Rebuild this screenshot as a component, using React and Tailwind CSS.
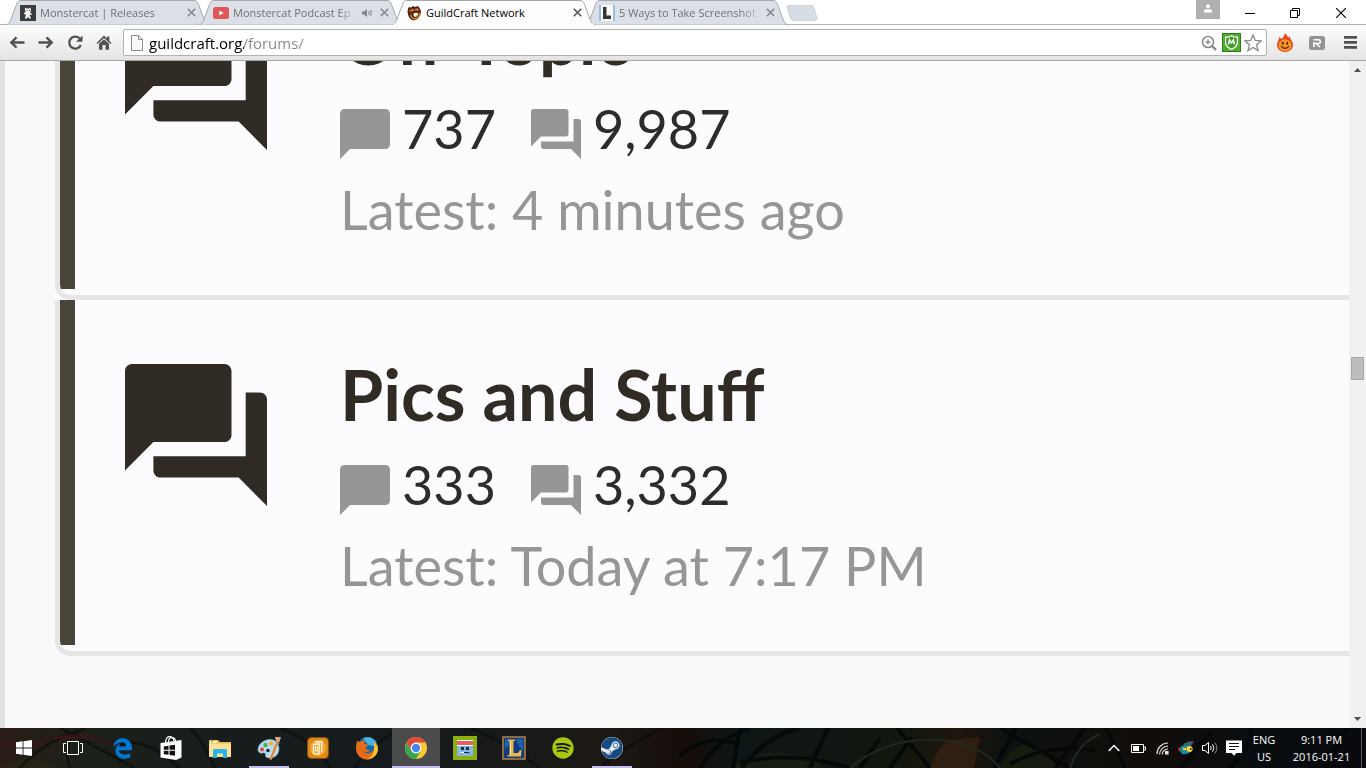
import React, { useState } from 'react';
import { FaSpotify, FaSteam } from 'react-icons/fa';
import { FaEdgeLegacy } from 'react-icons/fa6';

const forums = [
  { title: 'Off-Topic', threads: '737', posts: '9,987', latest: '4 minutes ago' },
  { title: 'Pics and Stuff', threads: '333', posts: '3,332', latest: 'Today at 7:17 PM' },
];

const tabs = [
  { title: 'Monstercat | Releases', icon: 'monstercat' },
  { title: 'Monstercat Podcast Ep.', icon: 'youtube', audio: true },
  { title: 'GuildCraft Network', icon: 'guildcraft', active: true },
  { title: '5 Ways to Take Screenshot', icon: 'lifewire' },
];

const ForumIcon = ({ className }) => (
  <svg viewBox="2 2 20 20" className={className} fill="currentColor" aria-hidden="true">
    <path d="M21 6h-2v9H6v2c0 .55.45 1 1 1h11l4 4V7c0-.55-.45-1-1-1zm-4 6V3c0-.55-.45-1-1-1H3c-.55 0-1 .45-1 1v14l4-4h10c.55 0 1-.45 1-1z" />
  </svg>
);

const BubbleIcon = ({ className }) => (
  <svg viewBox="2 2 20 20" className={className} fill="currentColor" aria-hidden="true">
    <path d="M20.2 2H3.8C2.8 2 2 2.8 2 3.8V22l4-4h14.2c1 0 1.8-.8 1.8-1.8V3.8C22 2.8 21.2 2 20.2 2z" />
  </svg>
);

const favicons = {
  monstercat: (
    <svg viewBox="0 0 16 16" className="size-4 shrink-0">
      <rect width="16" height="16" fill="#2b2b2b" />
      <path d="M5 2.500l1.500 1h2.500l1.500-1 .5 3.500-1 1.500 2 1.500-.7 1-1.800-.5.5 1.500 1 2.500H9l-1-2-1 2H4.800l1-3-.3-1.500-1.500.5v-1.500l2-1.500L5 6z" fill="#fff" />
      <path d="M6.500 5h1v1h-1zM9 5h1v1H9z" fill="#2b2b2b" />
    </svg>
  ),
  youtube: (
    <svg viewBox="0 0 16 16" className="size-4 shrink-0">
      <rect y="2" width="16" height="12" rx="2.500" fill="#e04a4a" />
      <path d="M6.300 5.500v5l4.400-2.500z" fill="#fff" />
    </svg>
  ),
  guildcraft: (
    <svg viewBox="0 0 16 16" className="size-4 shrink-0">
      <path d="M2 3.500l1-1.500 2 .5L7 1l2 1 3-1 1.500 2L15 6l-.5 4-3 4-4 1.500-3-1.500-2-3L1.500 7z" fill="#4a2413" />
      <path d="M3 5l3-2 2 1.500L12 3l1.500 3-2.500.5-3-1-3 1.500-2 .5z" fill="#a54a1c" />
      <path d="M8 8l3-.5 1.500 1.500L10 12l-2-.5L7 10z" fill="#fff3dc" />
      <path d="M4.500 8l1 4 3 2 4-2 1.500-4" fill="none" stroke="#d8892b" strokeWidth="1.300" />
      <path d="M5 6l3-1M9.500 4l2.500.5" stroke="#f0a040" />
      <path d="M3 8l2 1M6 9l1 2M10 6.500l2 1" stroke="#2a0f08" />
    </svg>
  ),
  lifewire: (
    <svg viewBox="0 0 16 16" className="size-4 shrink-0">
      <rect width="16" height="16" fill="#8fbcf0" />
      <rect x="2" width="12" height="16" fill="#fff" />
      <path d="M4 2h3.500v8.500H12V14H4z" fill="#222" />
    </svg>
  ),
};

const Tab = ({ tab }) => (
  <div className={tab.active ? 'relative z-10 flex h-[25px] w-[203px] -mr-[10px] items-center pl-[14px] pr-[13px]' : 'relative flex h-[25px] w-[203px] -mr-[10px] items-center pl-[14px] pr-[13px]'}>
    <svg viewBox="0 0 203 25" className="absolute inset-0 h-full w-full" aria-hidden="true">
      <path
        d="M0 24.500C2.500 24.500 3.500 23 4.500 20.500L10.500 4.500C11.500 1.500 12.500.5 15 .5H188C190.500.5 191.500 1.500 192.500 4.500L198.500 20.500C199.500 23 200.500 24.500 203 24.500"
        fill={tab.active ? '#fdfdfd' : '#dbe0e7'}
        stroke="#a5a8ac"
      />
      {tab.active && <path d="M1 24.500H202" stroke="#fdfdfd" strokeWidth="2" />}
    </svg>
    <a href="#tab" className="relative flex min-w-0 flex-1 items-center gap-1">
      <span className={tab.active ? '' : 'opacity-90'}>{favicons[tab.icon]}</span>
      <span
        className={
          tab.active
            ? 'min-w-0 flex-1 overflow-hidden whitespace-nowrap text-black'
            : 'min-w-0 flex-1 overflow-hidden whitespace-nowrap text-[#6f7174] [mask-image:linear-gradient(to_right,#000_85%,transparent)]'
        }
      >
        {tab.title}
      </span>
    </a>
    {tab.audio && (
      <svg viewBox="0 0 12 10" className="relative ml-1 mr-[3px] h-[10px] w-3 shrink-0" aria-hidden="true">
        <path d="M1 3.500h2L6 1v8L3 6.500H1z" fill="#808285" />
        <path d="M8 3v4M10 2v6" stroke="#808285" />
      </svg>
    )}
    <button aria-label="Close tab" className="relative ml-1 shrink-0">
      <svg viewBox="0 0 9 9" className={tab.active ? 'size-[9px] text-[#555]' : 'size-[9px] text-[#85888c]'}>
        <path d="M.8.8l7.400 7.400M8.200.8L.8 8.200" stroke="currentColor" strokeWidth="1.600" />
      </svg>
    </button>
  </div>
);

const TabStrip = () => (
  <header className="relative z-10 flex h-[25px] shrink-0 items-start bg-white pl-[6px] text-[11px] leading-4 shadow-[inset_0_-1px_0_#b4b4b4]">
    <nav className="flex pr-[10px]" aria-label="Tabs">
      {tabs.map((tab) => (
        <Tab key={tab.title} tab={tab} />
      ))}
    </nav>
    <button aria-label="New tab" className="-ml-[2px] mt-[5px]">
      <svg viewBox="0 0 32 16" className="h-4 w-8">
        <path d="M2.500.5H25c2 0 2.500 1 3 2.500l3 9.500c.5 2-.5 3-2 3H8c-2 0-3-1-3.500-2.500L1 3C.5 1.500 1 .5 2.500.5z" fill="#d7dde5" stroke="#c3c7cc" strokeWidth=".7" />
      </svg>
    </button>
    <div className="ml-auto flex items-start">
      <button aria-label="Profile" className="mr-5 flex h-[19px] w-6 justify-center bg-[#b1b1b1] pt-1">
        <svg viewBox="0 0 10 9" className="h-[9px] w-[10px]" fill="#fff">
          <circle cx="5" cy="2.200" r="2" />
          <path d="M1 8.500V7c0-1.400 2-2 4-2s4 .6 4 2v1.500z" />
        </svg>
      </button>
      <button aria-label="Minimize" className="mr-[25px] flex h-[26px] w-5 items-center justify-center">
        <svg viewBox="0 0 10 10" className="size-[10px]"><path d="M0 5.500h10" stroke="#000" /></svg>
      </button>
      <button aria-label="Restore" className="mr-[26px] flex h-[26px] w-5 items-center justify-center">
        <svg viewBox="0 0 10 10" className="size-[10px]" fill="none" stroke="#000">
          <path d="M.5 2.500h7v7h-7zM2.500 2.500v-2h7v7h-2" />
        </svg>
      </button>
      <button aria-label="Close" className="mr-[15px] flex h-[26px] w-5 items-center justify-center">
        <svg viewBox="0 0 10 10" className="size-[10px]"><path d="M0 0l10 10M10 0L0 10" stroke="#000" strokeWidth="1.100" /></svg>
      </button>
    </div>
  </header>
);

const Toolbar = () => {
  const [url, setUrl] = useState('guildcraft.org/forums/');

  return (
    <div className="flex h-9 shrink-0 items-center border-b border-[#a6a6a6] bg-linear-to-b from-[#fdfdfd] to-[#e4e4e4] pl-[9px] pr-[9px] text-[#515151]">
      <div className="flex items-center gap-[13px]">
        <button aria-label="Back">
          <svg viewBox="0 0 16 16" className="size-4" fill="none" stroke="currentColor" strokeWidth="2.400"><path d="M15.500 7.500H2.500M7.500 2.300L2.300 7.500l5.200 5.200" /></svg>
        </button>
        <button aria-label="Forward">
          <svg viewBox="0 0 16 16" className="size-4" fill="none" stroke="currentColor" strokeWidth="2.400"><path d="M.5 7.500h13M8.500 2.300l5.200 5.200-5.200 5.200" /></svg>
        </button>
        <button aria-label="Reload">
          <svg viewBox="0 0 16 16" className="size-4">
            <path d="M13.800 10A6 6 0 1 1 12.500 3.400" fill="none" stroke="currentColor" strokeWidth="2.300" />
            <path d="M15.500.5v6.200H9z" fill="currentColor" />
          </svg>
        </button>
        <button aria-label="Home">
          <svg viewBox="0 0 16 16" className="size-4" fill="currentColor">
            <path d="M8 .5L.5 8l1 1L8 2.900 14.500 9l1-1L13.300 5.800V1.500H11v2z" />
            <path d="M3 8.800L8 4.200l5 4.600v6H9.500V10h-3v4.800H3z" />
          </svg>
        </button>
      </div>
      <div className="ml-[11px] flex h-[27px] min-w-0 flex-1 items-center rounded-[2px] border border-[#b2b2b2] bg-white pl-[7px] pr-1">
        <svg viewBox="0 0 12 16" className="h-4 w-3 shrink-0" fill="#f8f8f8" stroke="#8c8c8c">
          <path d="M.5.5h7l4 4v11H.5zM7.500.5v4h4" />
        </svg>
        <input
          aria-label="Address"
          value={url}
          onChange={(e) => setUrl(e.target.value)}
          className="ml-[6px] h-6 min-w-0 flex-1 bg-[linear-gradient(to_right,#000_95px,#888_95px)] bg-clip-text text-[15px] text-transparent outline-none"
        />
        <div className="flex items-center gap-[3px]">
          <button aria-label="Zoom" className="mr-[2px]">
            <svg viewBox="0 0 16 16" className="size-4" fill="none" stroke="#8a8a8a">
              <circle cx="7" cy="7" r="5.500" strokeWidth="1.600" />
              <path d="M4.500 7h5M7 4.500v5" strokeWidth="1.300" />
              <path d="M11 11l4 4" strokeWidth="2.400" />
            </svg>
          </button>
          <button aria-label="SiteAdvisor">
            <svg viewBox="0 0 19 19" className="size-[19px]">
              <rect x=".5" y=".5" width="18" height="18" fill="#4fae2c" stroke="#2c7d17" />
              <path d="M3 3.500c2.500.3 4.500-.3 6.500-1.500 2 1.200 4 1.800 6.500 1.500v6c0 3.500-3 6-6.500 7.500C6 15.500 3 13 3 9.500z" fill="#fff" />
              <path d="M4.200 4.700c1.900.1 3.700-.4 5.300-1.300 1.600.9 3.400 1.400 5.300 1.300v4.700c0 2.700-2.500 4.800-5.300 6.200-2.800-1.400-5.300-3.500-5.300-6.200z" fill="#3c9a22" />
              <path d="M6.500 11.500l1-4.500 2 3 2-3 1 4.500" fill="none" stroke="#fff" strokeWidth="1.500" />
            </svg>
          </button>
          <button aria-label="Bookmark">
            <svg viewBox="0 0 18 18" className="size-[18px]" fill="#fff" stroke="#8b8b8b" strokeWidth="1.300">
              <path d="M9 1l2.300 5.400 5.700.5-4.400 3.800L14 16.500 9 13.400l-5 3.100 1.400-5.800L1 6.900l5.700-.5z" />
            </svg>
          </button>
        </div>
      </div>
      <div className="flex items-center">
        <button aria-label="Hola" className="ml-[10px]">
          <svg viewBox="0 0 16 19" className="h-[19px] w-4">
            <path d="M8 0c1 2 3 3 3 5l1.500-2c0 3 3.500 5 3.500 9 0 4-3.500 7-8 7s-8-3-8-7c0-3 2-4 2.200-8L4.500 6C6 5 7.500 3 8 0z" fill="#e8431b" />
            <path d="M8 6c4 1 6.500 3 6.500 6.500S12 18 8 18s-6.500-2-6.500-5.500S4 7 8 6z" fill="#f7951d" />
            <path d="M5.800 9v2.500M10.200 9v2.500" stroke="#40200a" strokeWidth="1.600" />
            <path d="M4 13c2 3.200 6 3.200 8 0" stroke="#40200a" strokeWidth="1.100" fill="none" />
          </svg>
        </button>
        <button aria-label="Extension" className="ml-4">
          <svg viewBox="0 0 16 14" className="h-[14px] w-4">
            <rect width="16" height="14" rx="2.500" fill="#949494" />
            <path d="M5 11V6M4.500 3.800H10c1.800 0 1.800 3.700 0 3.700H7L11 11" fill="none" stroke="#fff" strokeWidth="1.600" />
          </svg>
        </button>
        <button aria-label="Menu" className="ml-[19px]">
          <svg viewBox="0 0 13 13" className="size-[13px]" fill="currentColor">
            <path d="M0 0h13v2.800H0zM0 5h13v2.800H0zM0 10h13v2.800H0z" />
          </svg>
        </button>
      </div>
    </div>
  );
};

const Forum = ({ forum }) => (
  <li className="bg-white last:bg-transparent">
    <article className="flex overflow-hidden rounded-bl-[15px] border-b-5 border-l-5 border-[#e6e6e6] bg-[#fcfcff]">
      <div className="mb-[6px] w-[15px] shrink-0 bg-[#49443a]" />
      <ForumIcon className="ml-[50px] mt-[64px] size-[142px] shrink-0 text-[#302b25]" />
      <div className="ml-[73px] whitespace-nowrap pb-[48px] pt-[49px] font-[Lato,sans-serif] text-[54px] text-[#2c2c2c]">
        <h2 className="text-[70px] font-bold leading-[90px] text-[#302b25]">
          <a href="#forum">{forum.title}</a>
        </h2>
        <div className="flex h-[90px] items-center">
          <BubbleIcon className="mt-3 size-[50px] text-[#969696]" />
          <span className="ml-3">{forum.threads}</span>
          <ForumIcon className="ml-[35px] mt-3 size-[50px] text-[#969696]" />
          <span className="ml-3">{forum.posts}</span>
        </div>
        <p className="leading-[74px] text-[#969696]">Latest: {forum.latest}</p>
      </div>
    </article>
  </li>
);

const Scrollbar = () => (
  <div className="flex w-[17px] shrink-0 flex-col items-center bg-[#f1f1f1]" aria-hidden="true">
    <svg viewBox="0 0 17 17" className="size-[17px]"><path d="M5 11l3.500-4 3.500 4z" fill="#505050" /></svg>
    <div className="flex w-full flex-1 flex-col items-center">
      <div className="h-[44%]" />
      <div className="h-[23px] w-[13px] border border-[#a8a8a8] bg-[#bcbcbc]" />
    </div>
    <svg viewBox="0 0 17 17" className="size-[17px]"><path d="M5 6l3.500 4L12 6z" fill="#505050" /></svg>
  </div>
);

const apps = [
  {
    name: 'Start',
    icon: (
      <svg viewBox="0 0 16 16" className="size-4" fill="#fff">
        <path d="M0 2.200L6.600 1.300v6.200H0zM7.500 1.200L16 0v7.500H7.500zM0 8.500h6.600v6.200L0 13.800zM7.500 8.500H16V16l-8.500-1.200z" />
      </svg>
    ),
  },
  {
    name: 'Task view',
    icon: (
      <svg viewBox="0 0 20 14" className="h-[14px] w-5" fill="none" stroke="#fff">
        <path d="M4.500.5h11v13h-11zM3 2.500H.5v9H3M17 2.500h2.500v9H17" />
      </svg>
    ),
  },
  { name: 'Edge', icon: <FaEdgeLegacy className="size-[21px] text-[#0078d7]" /> },
  {
    name: 'Store',
    icon: (
      <svg viewBox="0 0 22 24" className="h-6 w-[22px]">
        <path d="M5.500 7C5.500 2 8 .7 9.500.7s4 1 4.500 4.300M8.500 6C8.500 2.500 10 1.500 12 1.500s3.500 1 3.500 4" fill="none" stroke="#fff" strokeWidth="1.200" />
        <path d="M.5 7L21.500 4v17.500L16 24 .5 21.500z" fill="#fff" />
        <path d="M3.800 10.500l4.700-.7v4H3.800zM9.500 9.600l5.500-.8v5H9.500zM3.800 14.800h4.700v4l-4.700-.6zM9.500 14.800H15v5l-5.500-.8z" fill="#111" />
      </svg>
    ),
  },
  {
    name: 'File Explorer',
    icon: (
      <svg viewBox="0 0 22 19" className="h-[19px] w-[22px]">
        <path d="M0 1h9l2 2h11v15H0z" fill="#e7b94b" />
        <path d="M1 2h7v2H1z" fill="#f7f2d0" />
        <path d="M2 2h2v1H2z" fill="#4fa66e" />
        <path d="M0 4.500h22V18H0z" fill="#ffe193" />
        <path d="M4 19v-7.500q0-1.500 1.500-1.500h11q1.500 0 1.500 1.500V19h-4v-4.500H8V19z" fill="#27b5ec" />
      </svg>
    ),
  },
  {
    name: 'Paint',
    running: true,
    icon: (
      <svg viewBox="0 0 24 24" className="size-6">
        <path d="M1 14C1 8 7 3.500 13 3.500S22 8 22 13s-4 9-9 9c-3 0-5-1-4.500-3 .5-1.500-1-2.500-3-2S1 16.500 1 14z" fill="#b7dcf3" stroke="#7fb4d5" strokeWidth=".6" />
        <circle cx="5" cy="13.500" r="2" fill="#d94a3a" />
        <circle cx="8.500" cy="9" r="2.200" fill="#51ad43" />
        <circle cx="14" cy="7.500" r="2.200" fill="#f0b52d" />
        <circle cx="11" cy="14.500" r="1.800" fill="#23282a" />
        <path d="M19 6l2.500 1-7 17-2-.5z" fill="#e88a2e" />
        <path d="M18 1l6 0-1.500 5-3 1z" fill="#d9a77b" />
        <path d="M19 5.500l3.500 1.300-.5 1.500-3-1.200z" fill="#8e9aa0" />
      </svg>
    ),
  },
  {
    name: 'Documents',
    icon: (
      <svg viewBox="0 0 22 22" className="size-[22px]">
        <rect x=".5" y=".5" width="21" height="21" rx="4" fill="#df8717" stroke="#8a4d09" />
        <circle cx="11" cy="11" r="8" fill="#f3a633" />
        <path d="M8 5l7-.5-.5 11M6.500 7.500l6-.8-.5 10.300-5.500-.5z" fill="none" stroke="#fff3d7" strokeWidth="1.400" />
        <path d="M8.500 10l2-.3v4.500l-2-.2z" fill="none" stroke="#fff3d7" />
      </svg>
    ),
  },
  {
    name: 'Firefox',
    icon: (
      <svg viewBox="0 0 24 24" className="size-6">
        <circle cx="12.500" cy="11.500" r="10.500" fill="#1667a8" />
        <path d="M8 2.500C12 0 19 1 21.500 7l-3 3-5-1-3-3.500z" fill="#49b3df" />
        <path d="M2 4.500c1 1 2 1.500 3.500 1.500C7 4.500 8.500 4 10 4 9 5.500 9 7 10 8l3 .5c.5 1.500-1.500 2-2.500 3 0 2 3 3.500 5 2-1 3-5.500 3.500-8 1C10 19 18 18 19.500 12c.5-2 0-4.500-1-6C22 8 23.500 11 22.800 14.500 21.500 20 17 23.500 12 23.500 5.500 23.500 1 18.500 1 12.500c0-3 .5-5.500 1-8z" fill="#e66d18" />
        <path d="M18.500 6C22 8 23.500 11 22.800 14.500 21.500 20 17 23.500 12 23.500c6-3 8.500-9 6.500-17.500z" fill="#fdc22c" />
      </svg>
    ),
  },
  {
    name: 'Chrome',
    active: true,
    icon: (
      <svg viewBox="0 0 22 22" className="size-[22px]">
        <circle cx="11" cy="11" r="11" fill="#fbc92f" />
        <path d="M1.500 5.500A11 11 0 0 1 20.500 5.500H11L6.200 13.700z" fill="#e0483a" />
        <path d="M1.500 5.500A11 11 0 0 0 11 22l4.800-8.300H6.200z" fill="#36a852" />
        <circle cx="11" cy="11" r="5.400" fill="#fff" />
        <circle cx="11" cy="11" r="4.200" fill="#4a86ee" />
      </svg>
    ),
  },
  {
    name: 'Dumb Ways',
    icon: (
      <svg viewBox="0 0 24 24" className="size-6">
        <rect width="24" height="24" fill="#8cb010" />
        <rect x="4" y="4" width="16" height="16" fill="#7fb9e4" />
        <path d="M4 4h16v5H4z" fill="#e95e62" />
        <path d="M4 4h16v1H4zM4 9h16v1H4z" fill="#fff" />
        <path d="M8 11h3v3H8zM13 11h3v3h-3z" fill="#1d2c3b" />
        <path d="M7 17.500h3l1-1h5v1" stroke="#1d2c3b" fill="none" />
        <path d="M7 16h4v1.500H7z" fill="#fff" />
      </svg>
    ),
  },
  {
    name: 'League of Legends',
    icon: (
      <svg viewBox="0 0 24 24" className="size-6">
        <rect x="1" y="1" width="22" height="22" fill="#113b7c" stroke="#9b7440" strokeWidth="1.800" />
        <path d="M3 3l7 1-3 5-4 4zM14 3h7v12l-5-6z" fill="#1d64ad" />
        <path d="M6 3.500h7v1.500h-1.500v12H16l2-3h1.500L19 20.500H5.500V19H7.500V5H6z" fill="#e9b64d" />
        <path d="M8.500 5v14" stroke="#fbe39a" />
      </svg>
    ),
  },
  { name: 'Spotify', icon: <FaSpotify className="size-[22px] text-[#a8c90c]" /> },
  {
    name: 'Steam',
    running: true,
    icon: (
      <span className="flex size-[22px] rounded-full bg-[#e4ebf2]">
        <FaSteam className="size-[22px] text-[#164b80]" />
      </span>
    ),
  },
];

const Backdrop = () => (
  <svg viewBox="0 0 1366 40" preserveAspectRatio="none" className="absolute inset-0 h-full w-full" aria-hidden="true">
    <defs>
      <linearGradient id="meadow">
        <stop offset="0" stopColor="#2b1d17" />
        <stop offset=".06" stopColor="#1c2119" />
        <stop offset=".14" stopColor="#191d1d" />
        <stop offset=".3" stopColor="#151b1d" />
        <stop offset=".45" stopColor="#1c1814" />
        <stop offset=".5" stopColor="#160d09" />
        <stop offset=".54" stopColor="#0e1516" />
        <stop offset=".66" stopColor="#12170f" />
        <stop offset=".7" stopColor="#1f150d" />
        <stop offset=".74" stopColor="#0c1210" />
        <stop offset=".84" stopColor="#120d0a" />
        <stop offset=".92" stopColor="#090d10" />
        <stop offset="1" stopColor="#08090c" />
      </linearGradient>
    </defs>
    <rect width="1366" height="40" fill="url(#meadow)" />
    <path d="M0 40q30-18 60 0zM730 40q40-28 90-5v5zM1000 40q25-45 55-4v4z" fill="#252a10" opacity=".4" />
    <path d="M930 40q8-22 20-28l30-3-6 31z" fill="#412714" opacity=".5" />
    <g fill="none" stroke="#080d0c" strokeWidth="3" opacity=".6">
      <path d="M20 40Q45 12 82 2M70 40Q60 10 86 0M135 40Q98 20 60 0M180 40Q140 5 118 18M215 40Q205 16 190 0M330 40Q315 13 280 0M355 40Q370 12 410 0M540 40Q505 13 470 0M600 40Q625 17 665 0" />
    </g>
    <path d="M0 13q18 7 34 0M20 25Q50 5 94 8M60 12q30-8 65 9" fill="none" stroke="#3a1517" strokeWidth="2" />
    <path
      d="M680 28Q705 5 737 16M700 40Q718 10 750 0M733 40L740 0M742 40Q765 8 800 0M740 35Q790 22 850 40M810 40L828 0M860 40L880 10M890 40L912 9M897 0L930 40M994 40L1016 0M1010 36Q1045 16 1095 22M1055 40L1085 0M1125 40L1106 0M1180 40L1210 5M1230 40Q1255 12 1250 0M1325 40L1348 0M1000 0l70 40"
      fill="none" stroke="#030707" strokeWidth="4" opacity=".8"
    />
    <path d="M850 40Q890 6 950 13Q985 20 1000 40M1070 40q8-25 30-34" fill="none" stroke="#1d2922" strokeWidth="2" />
  </svg>
);

const Tray = () => (
  <div className="relative ml-auto flex items-center text-center text-[11px] leading-[17px] text-white">
    <button aria-label="Show hidden icons" className="flex w-6 justify-center">
      <svg viewBox="0 0 12 8" className="h-2 w-3"><path d="M.7 7L6 1.500 11.300 7" fill="none" stroke="#fff" strokeWidth="1.400" /></svg>
    </button>
    <button aria-label="Battery" className="flex w-6 justify-center">
      <svg viewBox="0 0 15 9" className="h-[9px] w-[15px]">
        <path d="M.5.5h12v8H.5zM13 3h1.500v3H13" fill="none" stroke="#fff" />
        <path d="M2 2h6v5H2z" fill="#fff" />
      </svg>
    </button>
    <button aria-label="Network" className="flex w-6 justify-center">
      <svg viewBox="0 0 13 13" className="size-[13px]" fill="none" stroke="#d8d8d8" strokeWidth="1.200">
        <path d="M1 12A11 11 0 0 1 12 1M3.500 12.500A9 9 0 0 1 12 4M6 12.500A6.500 6.500 0 0 1 12 7" />
        <rect x="9.500" y="9.500" width="2.500" height="2.500" fill="#fff" />
      </svg>
    </button>
    <button aria-label="Fish" className="flex w-6 justify-center">
      <svg viewBox="0 0 17 14" className="h-[14px] w-[17px]">
        <path d="M5 4Q9-.5 16 .5L13 5z" fill="#3a6370" />
        <path d="M1 8c2-4 7-5 11-3l3 3c-2 4-7 6-11 5z" fill="#168aa0" />
        <path d="M0 6l3 2-2 3z" fill="#ce2b20" />
        <circle cx="11.500" cy="8" r="3" fill="#ffd329" />
        <path d="M5 7h3v2H5z" fill="#ffd329" />
        <path d="M12 7h1.500v2H12z" fill="#332" />
      </svg>
    </button>
    <button aria-label="Volume" className="flex w-6 justify-center">
      <svg viewBox="0 0 16 14" className="h-[14px] w-4" fill="none" stroke="#fff">
        <path d="M.5 4.500h2.500l3.500-3v11L3 9.500H.5zM8.500 5q1.500 2 0 4M10.500 3.300q3 3.700 0 7.400" />
        <path d="M12.700 1.500q4.500 5.500 0 11" stroke="#8a8a8a" />
      </svg>
    </button>
    <button aria-label="Notifications" className="flex w-6 justify-center">
      <svg viewBox="0 0 16 16" className="size-4">
        <path d="M0 .5h16V13h-5.500L8 15.800 5.500 13H0z" fill="#fff" />
        <path d="M3 3.500h10M3 6.500h10M3 9.500h6" stroke="#111" />
      </svg>
    </button>
    <button className="w-9">
      <span className="block">ENG</span>
      <span className="block">US</span>
    </button>
    <button className="w-[79px] whitespace-nowrap">
      <time className="block">9:11 PM</time>
      <time className="block">2016-01-21</time>
    </button>
    <button aria-label="Show desktop" className="h-10 w-[5px] border-l border-[#5c5e60]" />
  </div>
);

const Taskbar = () => (
  <footer className="relative flex h-10 shrink-0 bg-[#121515]">
    <Backdrop />
    <nav className="relative flex gap-px" aria-label="Taskbar">
      {apps.map((app) => (
        <button
          key={app.name}
          aria-label={app.name}
          className={app.active ? 'relative flex h-10 w-12 items-center justify-center bg-[#4b4b4b]' : 'relative flex h-10 w-12 items-center justify-center'}
        >
          {app.icon}
          {app.active && <span className="absolute inset-x-0 bottom-0 h-[2px] bg-[#c4bdf0]" />}
          {app.running && <span className="absolute inset-x-1 bottom-0 h-[2px] bg-[#c4bdf0]" />}
        </button>
      ))}
    </nav>
    <Tray />
  </footer>
);

const App = () => (
  <div className="flex h-screen flex-col overflow-hidden bg-white font-['Open_Sans',sans-serif]">
    <TabStrip />
    <Toolbar />
    <div className="flex min-h-0 flex-1">
      <main className="flex min-w-0 flex-1 flex-col justify-end overflow-hidden border-l-5 border-[#e2e2e2] bg-[#f9f9f9] pb-[72px] pl-[50px]">
        <ul>
          {forums.map((forum) => (
            <Forum key={forum.title} forum={forum} />
          ))}
        </ul>
      </main>
      <Scrollbar />
    </div>
    <Taskbar />
  </div>
);

export default App;
